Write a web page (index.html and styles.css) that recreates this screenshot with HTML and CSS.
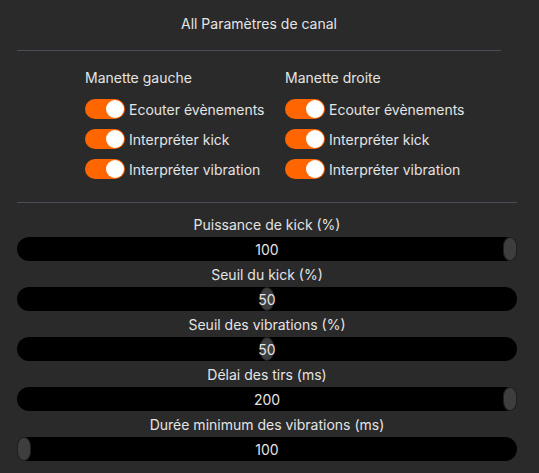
FILE: index.html
```html
<!DOCTYPE html>
<html lang="fr">
    <head>
        <meta charset="UTF-8">
        <title>All Paramètres de canal</title>
        <link rel="stylesheet" href="styles.css">
    </head>
    <body>
        <div class="panel">
            <div class="title">All Paramètres de canal</div>
            <div class="sep short"></div>

            <div class="pads">
                <div class="pad">
                    <div class="padName">Manette gauche</div>
                    <div class="toggleRow"><span class="toggle on"><span class="knob"></span></span>Ecouter évènements</div>
                    <div class="toggleRow"><span class="toggle on"><span class="knob"></span></span>Interpréter kick</div>
                    <div class="toggleRow"><span class="toggle on"><span class="knob"></span></span>Interpréter vibration</div>
                </div>
                <div class="pad">
                    <div class="padName">Manette droite</div>
                    <div class="toggleRow"><span class="toggle on"><span class="knob"></span></span>Ecouter évènements</div>
                    <div class="toggleRow"><span class="toggle on"><span class="knob"></span></span>Interpréter kick</div>
                    <div class="toggleRow"><span class="toggle on"><span class="knob"></span></span>Interpréter vibration</div>
                </div>
            </div>

            <div class="sep"></div>

            <div class="sliders">
                <div class="slider">
                    <div class="sliderLabel">Puissance de kick (%)</div>
                    <div class="track">
                        <div class="rail"><span class="grab" style="left: 100%"></span></div>
                        <span class="value">100</span>
                    </div>
                </div>
                <div class="slider">
                    <div class="sliderLabel">Seuil du kick (%)</div>
                    <div class="track">
                        <div class="rail"><span class="grab" style="left: 50%"></span></div>
                        <span class="value">50</span>
                    </div>
                </div>
                <div class="slider">
                    <div class="sliderLabel">Seuil des vibrations (%)</div>
                    <div class="track">
                        <div class="rail"><span class="grab" style="left: 50%"></span></div>
                        <span class="value">50</span>
                    </div>
                </div>
                <div class="slider">
                    <div class="sliderLabel">Délai des tirs (ms)</div>
                    <div class="track">
                        <div class="rail"><span class="grab" style="left: 100%"></span></div>
                        <span class="value">200</span>
                    </div>
                </div>
                <div class="slider">
                    <div class="sliderLabel">Durée minimum des vibrations (ms)</div>
                    <div class="track">
                        <div class="rail"><span class="grab" style="left: 0%"></span></div>
                        <span class="value">100</span>
                    </div>
                </div>
            </div>
        </div>
    </body>
</html>
```

FILE: styles.css
```css
html, body {
    margin: 0;
    background-color: #2a2a2a;
}
body {
    font-family: Inter, "Noto Sans", sans-serif;
    font-size: 14px;
    color: #e4e4e4;
}
.panel {
    width: 500px;
    padding-left: 17px;
}
.title {
    width: 484px;
    text-align: center;
    padding-top: 15px;
    height: 50px;
    line-height: 18px;
    box-sizing: border-box;
}
.sep {
    height: 1px;
    background-color: #4d4d56;
}
.sep.short {
    width: 484px;
}
.pads {
    display: flex;
    padding: 17px 0 23px 68px;
}
.pad {
    width: 200px;
    display: flex;
    flex-direction: column;
    gap: 10px;
}
.padName {
    line-height: 20px;
    margin-bottom: 1px;
}
.toggleRow {
    display: flex;
    align-items: center;
    gap: 4px;
    height: 20px;
}
.toggle {
    position: relative;
    width: 40px;
    height: 20px;
    border-radius: 10px;
    background-color: #ff6600;
    flex-shrink: 0;
}
.knob {
    position: absolute;
    top: 1px;
    right: 1px;
    width: 18px;
    height: 18px;
    border-radius: 50%;
    background-color: #ffffff;
}
.sliders {
    padding-top: 12px;
    display: flex;
    flex-direction: column;
    gap: 4px;
}
.sliderLabel {
    text-align: center;
    line-height: 20px;
    margin-bottom: 2px;
}
.track {
    position: relative;
    height: 24px;
    border-radius: 12px;
    background-color: #000000;
}
/* the grab travels over the track minus its own width */
.rail {
    position: relative;
    width: calc(100% - 14px);
    height: 100%;
}
.grab {
    position: absolute;
    top: 0;
    width: 14px;
    height: 24px;
    box-sizing: border-box;
    border: 1px solid #1e1e1e;
    border-radius: 7px / 9px;
    background-color: #3e3e3e;
}
.value {
    position: absolute;
    inset: 0;
    text-align: center;
    line-height: 24px;
    padding-top: 1px;
}
```
